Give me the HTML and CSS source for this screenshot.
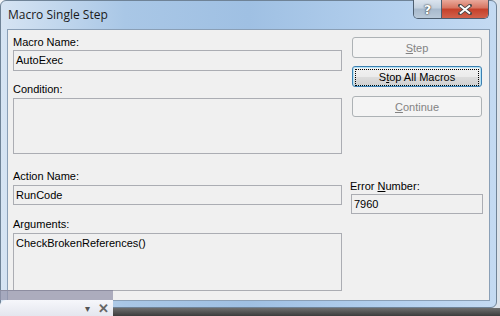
FILE: index.html
```html
<!DOCTYPE html>
<html lang="en">
<head>
    <meta charset="UTF-8">
    <title>Macro Single Step</title>
    <link rel="stylesheet" href="styles.css">
</head>
<body>

    <div class="window">
        <div class="titlebar">
            <span class="title">Macro Single Step</span>
            <div class="caption-buttons">
                <span class="cap-btn help">?</span>
                <span class="cap-btn close">
                    <svg width="14" height="11" viewBox="0 0 14 11">
                        <path d="M2 1.5 L12 9.5 M12 1.5 L2 9.5" stroke="#4a4a4a" stroke-width="3.6" stroke-linecap="square"/>
                        <path d="M2 1.5 L12 9.5 M12 1.5 L2 9.5" stroke="#fff" stroke-width="2"/>
                    </svg>
                </span>
            </div>
        </div>

        <div class="panel">
            <div class="col-left">
                <label class="lbl first">Macro Name:</label>
                <div class="field">AutoExec</div>

                <label class="lbl">Condition:</label>
                <div class="field box-cond"></div>

                <label class="lbl">Action Name:</label>
                <div class="field short">RunCode</div>

                <label class="lbl args">Arguments:</label>
                <div class="field box-args">CheckBrokenReferences()</div>
            </div>

            <div class="col-right">
                <button class="btn disabled"><u>S</u>tep</button>
                <button class="btn focused"><span class="focus-rect">S<u>t</u>op All Macros</span></button>
                <button class="btn disabled"><u>C</u>ontinue</button>

                <label class="lbl err">Error <u>N</u>umber:</label>
                <div class="field short">7960</div>
            </div>
        </div>
    </div>
    <div class="taskbar"></div>

    <div class="dock">
        <div class="dock-top"></div>
        <div class="dock-bar">
            <span class="dock-arrow">&#9662;</span>
            <span class="dock-x">&#10005;</span>
        </div>
    </div>

</body>
</html>
```

FILE: styles.css
```css
body {
    margin: 0;
    width: 500px;
    height: 316px;
    overflow: hidden;
    font-family: "Liberation Sans", Arial, sans-serif;
    font-size: 11px;
    background: linear-gradient(to right, #f4f6f9, #dde3ea);
    position: relative;
}
.window {
    width: 497px;
    height: 308px;
    box-sizing: border-box;
    border: 1px solid #6f8397;
    border-radius: 6px;
    background: linear-gradient(to right, #d6e4f3 0, #a9c7e6 25%, #9fc0e3 50%, #b4d0ee 80%, #c4daf2 100%);
    padding: 0 6px 6px 6px;
    display: flex;
    flex-direction: column;
}
.titlebar {
    height: 28px;
    display: flex;
    justify-content: space-between;
    align-items: flex-start;
}
.title {
    font-family: "Open Sans", "Noto Sans", sans-serif;
    font-size: 12px;
    color: #1a1a1a;
    padding: 5px 0 0 1px;
}
.caption-buttons {
    display: flex;
    margin-right: 1px;
    margin-top: -1px;
    border: 1px solid #4d5e70;
    border-top: none;
    border-radius: 0 0 5px 5px;
    overflow: hidden;
    height: 18px;
}
.cap-btn {
    display: flex;
    align-items: center;
    justify-content: center;
    height: 18px;
}
.help {
    width: 27px;
    background: linear-gradient(to bottom, #dbe4ee 0, #c2d0de 45%, #a7b9cc 50%, #b9c9d9 100%);
    border-right: 1px solid #4d5e70;
    color: #fff;
    font-family: "DejaVu Sans", sans-serif;
    font-size: 13px;
    font-weight: bold;
    text-shadow: 0 0 2px #333, 0 0 1px #333;
}
.close {
    width: 46px;
    background: linear-gradient(to bottom, #e9a99b 0, #d7735f 45%, #c5402a 50%, #d2614b 100%);
}
.panel {
    flex: 1;
    background: #f0f0f0;
    border: 1px solid #8a9fb6;
    display: flex;
    padding: 6px 0 0 5px;
}
.col-left {
    width: 329px;
    display: flex;
    flex-direction: column;
}
.col-right {
    width: 133px;
    margin-left: 9px;
    display: flex;
    flex-direction: column;
    padding-top: 1px;
}
.lbl {
    display: block;
    line-height: 13px;
    height: 13px;
    color: #000;
    margin: 12px 0 2px 0;
}
.lbl.first {
    margin-top: 0;
    margin-bottom: 1px;
}
.col-left .lbl:nth-of-type(3) {
    margin-top: 16px;
}
.lbl.args {
    margin-top: 13px;
}
.field {
    box-sizing: border-box;
    height: 21px;
    border: 1px solid #abadb3;
    background: #f0f0f0;
    padding: 3px 0 0 2px;
    line-height: 13px;
    color: #000;
}
.field.short {
    height: 20px;
}
.box-cond {
    height: 56px;
}
.box-args {
    height: 58px;
}
.btn {
    box-sizing: border-box;
    width: 130px;
    height: 21px;
    margin: 0 0 8px 1px;
    padding: 0;
    border: 1px solid #adb2b5;
    border-radius: 3px;
    font-family: inherit;
    font-size: 11px;
    color: #000;
    background: linear-gradient(to bottom, #f2f2f2 0, #ebebeb 50%, #dddddd 51%, #cfcfcf 100%);
}
.btn.disabled {
    background: #f4f4f4;
    color: #838383;
}
.btn.focused {
    border-color: #3c7fb1;
    box-shadow: inset 0 0 0 1px #b3e3f7;
    padding: 2px;
    margin-bottom: 9px;
}
.focus-rect {
    display: block;
    height: 15px;
    line-height: 15px;
    border: 1px dotted #000;
}
.lbl.err {
    margin: 55px 0 1px -1px;
}
.col-right .field {
    width: 132px;
}
.taskbar {
    height: 8px;
    background: linear-gradient(to bottom, #6e6e6e, #3c3c3c);
}
.dock {
    position: absolute;
    left: 0;
    top: 290px;
    width: 113px;
    height: 26px;
    display: flex;
    flex-direction: column;
}
.dock-top {
    height: 9px;
    background: rgba(150, 150, 172, 0.75);
    border-top: 1px solid #8d8da0;
}
.dock-bar {
    flex: 1;
    background: linear-gradient(to bottom, #f6f7fb, #e4e6ee);
    border-radius: 6px 0 0 0;
    display: flex;
    justify-content: flex-end;
    align-items: center;
    padding-right: 4px;
    gap: 8px;
    color: #555;
}
.dock-arrow {
    font-size: 10px;
}
.dock-x {
    font-size: 13px;
    font-weight: bold;
    color: #666;
}
```
